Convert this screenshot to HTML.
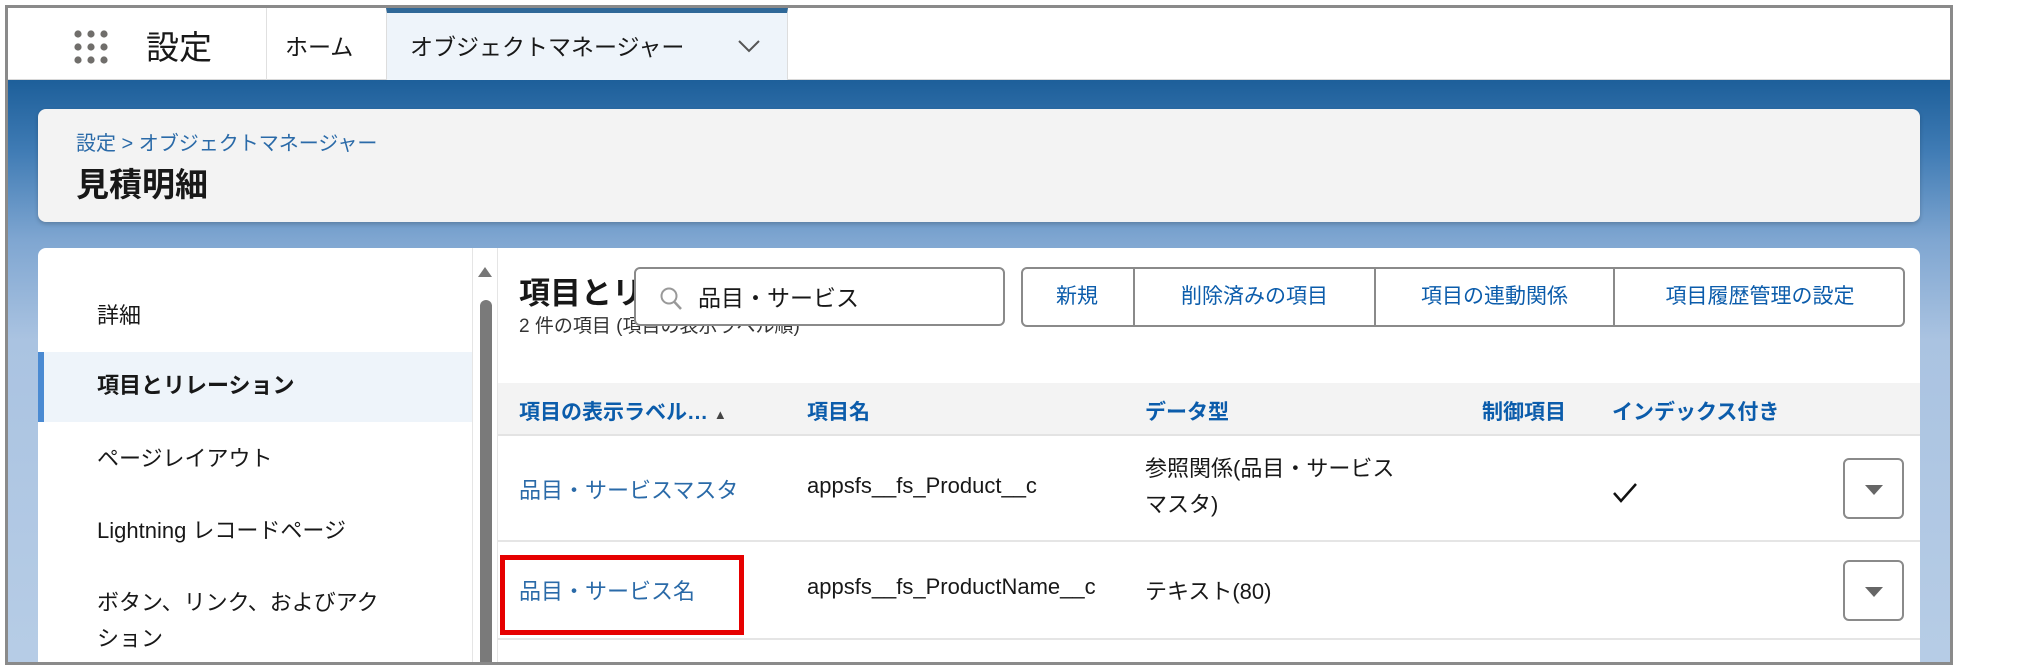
<!DOCTYPE html>
<html><head><meta charset="utf-8"><style>
*{margin:0;padding:0;box-sizing:border-box}
body{width:2027px;height:672px;background:#fff;position:relative;overflow:hidden;font-family:"Liberation Sans","Noto Sans CJK JP",sans-serif;color:#181818}
.a{position:absolute}
.frame{left:5px;top:5px;width:1948px;height:660px;border:3px solid #8a8a8a;overflow:hidden;background:#fff}
.blue{color:#0b5cab}
</style></head><body>
<div class="a frame">
 <div class="a" style="left:0;top:0;width:1942px;height:72px;background:#fff;border-bottom:1px solid #d8d8d8"></div>
 <svg class="a" style="left:64px;top:21px" width="40" height="36" viewBox="0 0 40 36">
  <g fill="#706e6b"><circle cx="6" cy="5" r="3.6"/><circle cx="19" cy="5" r="3.6"/><circle cx="32" cy="5" r="3.6"/><circle cx="6" cy="18" r="3.6"/><circle cx="19" cy="18" r="3.6"/><circle cx="32" cy="18" r="3.6"/><circle cx="6" cy="31" r="3.6"/><circle cx="19" cy="31" r="3.6"/><circle cx="32" cy="31" r="3.6"/></g></svg>
 <div class="a" style="left:138px;top:13px;font-size:33px">設定</div>
 <div class="a" style="left:258px;top:0;width:1px;height:72px;background:#e0e0e0"></div>
 <div class="a" style="left:277px;top:20px;font-size:23px">ホーム</div>
 <div class="a" style="left:378px;top:0;width:402px;height:72px;background:#eef4fa;border-top:5px solid #2f6898;border-left:1px solid #ddd;border-right:1px solid #ddd"></div>
 <div class="a" style="left:402px;top:20px;font-size:23px">オブジェクトマネージャー</div>
 <svg class="a" style="left:728px;top:30px" width="26" height="16" viewBox="0 0 26 16"><path d="M3 3 L13 13 L23 3" fill="none" stroke="#555" stroke-width="2"/></svg>
 <div class="a" style="left:0;top:72px;width:1942px;height:600px;background:linear-gradient(#1d5f9a 0px,#3f7bb4 70px,#7fa6d1 160px,#aac3e1 260px,#b7cde6 600px)"></div>
 <div class="a" style="left:30px;top:101px;width:1882px;height:113px;background:#f3f3f3;border-radius:8px;box-shadow:0 2px 4px rgba(0,0,0,.2)"></div>
 <div class="a blue" style="left:68px;top:119px;font-size:20px;color:#2a6aa8">設定 &gt; オブジェクトマネージャー</div>
 <div class="a" style="left:68px;top:150px;font-size:33px;font-weight:bold">見積明細</div>
 <div class="a" style="left:30px;top:240px;width:434px;height:430px;background:#fff;border-radius:8px 0 0 0"></div>
 <div class="a" style="left:89px;top:290px;font-size:22px">詳細</div>
 <div class="a" style="left:30px;top:344px;width:434px;height:70px;background:#eef4fa;border-left:6px solid #4a8ad2"></div>
 <div class="a" style="left:89px;top:360px;font-size:22px;font-weight:bold">項目とリレーション</div>
 <div class="a" style="left:89px;top:433px;font-size:22px">ページレイアウト</div>
 <div class="a" style="left:89px;top:505px;font-size:22px">Lightning レコードページ</div>
 <div class="a" style="left:89px;top:577px;font-size:22px">ボタン、リンク、およびアク</div>
 <div class="a" style="left:89px;top:613px;font-size:22px">ション</div>
 <div class="a" style="left:464px;top:240px;width:26px;height:430px;background:#fff;border-left:1px solid #e5e5e5;border-right:1px solid #e5e5e5"></div>
 <svg class="a" style="left:469px;top:258px" width="16" height="12"><path d="M8 1 L15 11 L1 11Z" fill="#777"/></svg>
 <div class="a" style="left:472px;top:292px;width:12px;height:380px;background:#7a7a7a;border-radius:6px"></div>
 <div class="a" style="left:490px;top:240px;width:1422px;height:430px;background:#fff;border-radius:0 8px 0 0"></div>
 <div class="a" style="left:511px;top:260px;font-size:31px;font-weight:bold">項目とリ</div>
 <div class="a" style="left:511px;top:303px;font-size:19px;color:#333">2 件の項目 (項目の表示ラベル順)</div>
 <div class="a" style="left:626px;top:259px;width:371px;height:59px;background:#fff;border:2px solid #8a8a8a;border-radius:6px"></div>
 <svg class="a" style="left:651px;top:278px" width="24" height="26"><circle cx="10" cy="10" r="7.5" fill="none" stroke="#999" stroke-width="2"/><path d="M15.5 16 L22 23" stroke="#999" stroke-width="2.5"/></svg>
 <div class="a" style="left:690px;top:271px;font-size:23px">品目・サービス</div>
 <div class="a" style="left:1013px;top:259px;width:884px;height:60px;border:2px solid #8a8a8a;border-radius:6px;background:#fff"></div>
 <div class="a" style="left:1125px;top:259px;width:2px;height:60px;background:#8a8a8a"></div>
 <div class="a" style="left:1366px;top:259px;width:2px;height:60px;background:#8a8a8a"></div>
 <div class="a" style="left:1605px;top:259px;width:2px;height:60px;background:#8a8a8a"></div>
 <div class="a blue" style="left:1013px;top:272px;width:112px;text-align:center;font-size:21px">新規</div>
 <div class="a blue" style="left:1127px;top:272px;width:239px;text-align:center;font-size:21px">削除済みの項目</div>
 <div class="a blue" style="left:1368px;top:272px;width:237px;text-align:center;font-size:21px">項目の連動関係</div>
 <div class="a blue" style="left:1607px;top:272px;width:290px;text-align:center;font-size:21px">項目履歴管理の設定</div>
 <div class="a" style="left:490px;top:375px;width:1422px;height:53px;background:#f3f3f3;border-bottom:2px solid #e3e3e3"></div>
 <div class="a blue" style="left:511px;top:388px;font-size:21px;font-weight:bold">項目の表示ラベル… <span style="font-size:13px;color:#444">▲</span></div>
 <div class="a blue" style="left:799px;top:388px;font-size:21px;font-weight:bold">項目名</div>
 <div class="a blue" style="left:1137px;top:388px;font-size:21px;font-weight:bold">データ型</div>
 <div class="a blue" style="left:1474px;top:388px;font-size:21px;font-weight:bold">制御項目</div>
 <div class="a blue" style="left:1604px;top:388px;font-size:21px;font-weight:bold">インデックス付き</div>
 <div class="a blue" style="left:511px;top:465px;font-size:22px;color:#2a6aa8">品目・サービスマスタ</div>
 <div class="a" style="left:799px;top:465px;font-size:22px">appsfs__fs_Product__c</div>
 <div class="a" style="left:1137px;top:443px;font-size:22px;line-height:36px">参照関係(品目・サービス<br>マスタ)</div>
 <svg class="a" style="left:1604px;top:474px" width="26" height="22"><path d="M2 11 L9 19 L24 2" fill="none" stroke="#111" stroke-width="2.5"/></svg>
 <div class="a" style="left:1835px;top:450px;width:61px;height:61px;border:2px solid #8a8a8a;border-radius:6px"></div>
 <svg class="a" style="left:1856px;top:476px" width="20" height="12"><path d="M1 1 L19 1 L10 11Z" fill="#666"/></svg>
 <div class="a" style="left:490px;top:532px;width:1422px;height:2px;background:#e5e5e5"></div>
 <div class="a blue" style="left:511px;top:566px;font-size:22px;color:#2a6aa8">品目・サービス名</div>
 <div class="a" style="left:799px;top:566px;font-size:22px">appsfs__fs_ProductName__c</div>
 <div class="a" style="left:1137px;top:566px;font-size:22px">テキスト(80)</div>
 <div class="a" style="left:1835px;top:552px;width:61px;height:61px;border:2px solid #8a8a8a;border-radius:6px"></div>
 <svg class="a" style="left:1856px;top:578px" width="20" height="12"><path d="M1 1 L19 1 L10 11Z" fill="#666"/></svg>
 <div class="a" style="left:490px;top:630px;width:1422px;height:2px;background:#e5e5e5"></div>
 <div class="a" style="left:492px;top:547px;width:244px;height:80px;border:5px solid #e60000"></div>
</div>
</body></html>
